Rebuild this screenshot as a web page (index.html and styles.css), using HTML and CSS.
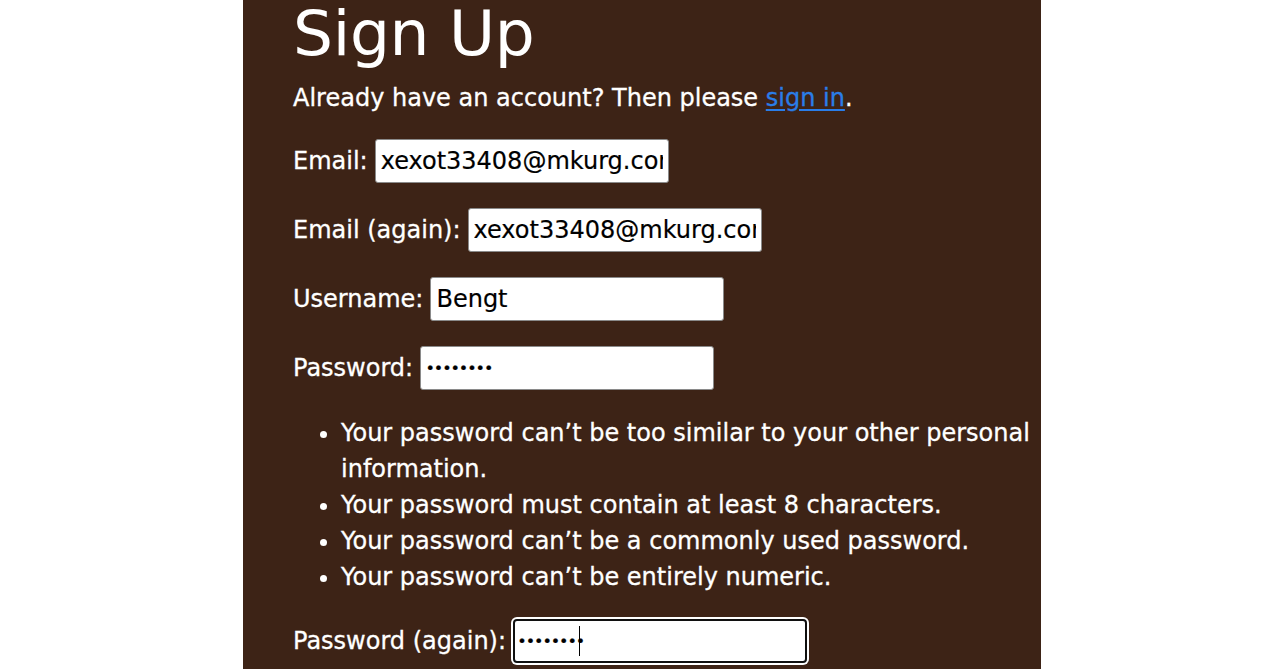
FILE: index.html
```html
<!DOCTYPE html>
<html lang="en">
<head>
<meta charset="utf-8">
<title>Sign Up</title>
<link rel="stylesheet" href="styles.css">
</head>
<body>
<main class="panel">
  <h1 class="title">Sign Up</h1>
  <p class="intro">Already have an account? Then please <a class="link" href="#">sign in</a>.</p>
  <form class="form">
    <div class="row">
      <label class="label" for="email">Email:</label>
      <input class="field" id="email" type="email" value="xexot33408@mkurg.com">
    </div>
    <div class="row">
      <label class="label" for="email2">Email (again):</label>
      <input class="field" id="email2" type="email" value="xexot33408@mkurg.com">
    </div>
    <div class="row">
      <label class="label" for="username">Username:</label>
      <input class="field" id="username" type="text" value="Bengt">
    </div>
    <div class="row">
      <label class="label" for="password1">Password:</label>
      <input class="field pass" id="password1" type="password" value="abcdefgh">
    </div>
    <ul class="help">
      <li>Your password can’t be too similar to your other personal information.</li>
      <li>Your password must contain at least 8 characters.</li>
      <li>Your password can’t be a commonly used password.</li>
      <li>Your password can’t be entirely numeric.</li>
    </ul>
    <div class="row">
      <label class="label" for="password2">Password (again):</label>
      <span class="focus-wrap">
        <input class="field pass focused" id="password2" type="password" value="abcdefgh">
        <span class="caret"></span>
      </span>
    </div>
  </form>
</main>
</body>
</html>
```
FILE: styles.css
```css
html, body {
  margin: 0;
  padding: 0;
  background: #ffffff;
  height: 100%;
  overflow: hidden;
}
body {
  font-family: "DejaVu Sans", "Liberation Sans", sans-serif;
  color: #ffffff;
}
.panel {
  width: 798px;
  margin: 0 auto;
  background: #3d2316;
  min-height: 100%;
  box-sizing: border-box;
  padding: 0 0 0 50px;
  -webkit-text-stroke: 0.3px currentColor;
}
.title {
  margin: 0;
  font-size: 63px;
  font-weight: normal;
  line-height: 68px;
  letter-spacing: -0.3px;
  -webkit-text-stroke: 0;
}
.intro {
  margin: 12px 0 0;
  font-size: 24px;
  line-height: 36px;
}
.link {
  color: #2a7de8;
  text-decoration: underline;
  text-underline-offset: 3px;
}
.form {
  margin-top: 23px;
  display: flex;
  flex-direction: column;
}
.row {
  display: flex;
  align-items: center;
  column-gap: 7px;
  height: 44px;
  margin-bottom: 25px;
  font-size: 24px;
}
.label {
  white-space: nowrap;
}
.field {
  box-sizing: border-box;
  width: 294px;
  height: 44px;
  margin: 0;
  padding: 0 5px;
  border: 1px solid #8a8a8a;
  border-radius: 3px;
  background: #ffffff;
  color: #000000;
  font-family: "DejaVu Sans", sans-serif;
  font-size: 24px;
  outline: none;
  -webkit-text-stroke: 0.2px #000000;
}
.pass {
  font-family: "Liberation Sans", sans-serif;
  font-size: 17px;
  letter-spacing: 2.4px;
  padding-left: 6px;
}
.focus-wrap {
  position: relative;
  display: flex;
}
.focused {
  border: 2px solid #101010;
  border-radius: 4px;
  box-shadow: 0 0 0 2px #ffffff;
  padding-left: 4px;
}
.caret {
  position: absolute;
  left: 66px;
  top: 7px;
  width: 1px;
  height: 30px;
  background: #000000;
}
.help {
  margin: 0 0 24px;
  padding: 0 0 0 48px;
  font-size: 24px;
  line-height: 36px;
}
```
